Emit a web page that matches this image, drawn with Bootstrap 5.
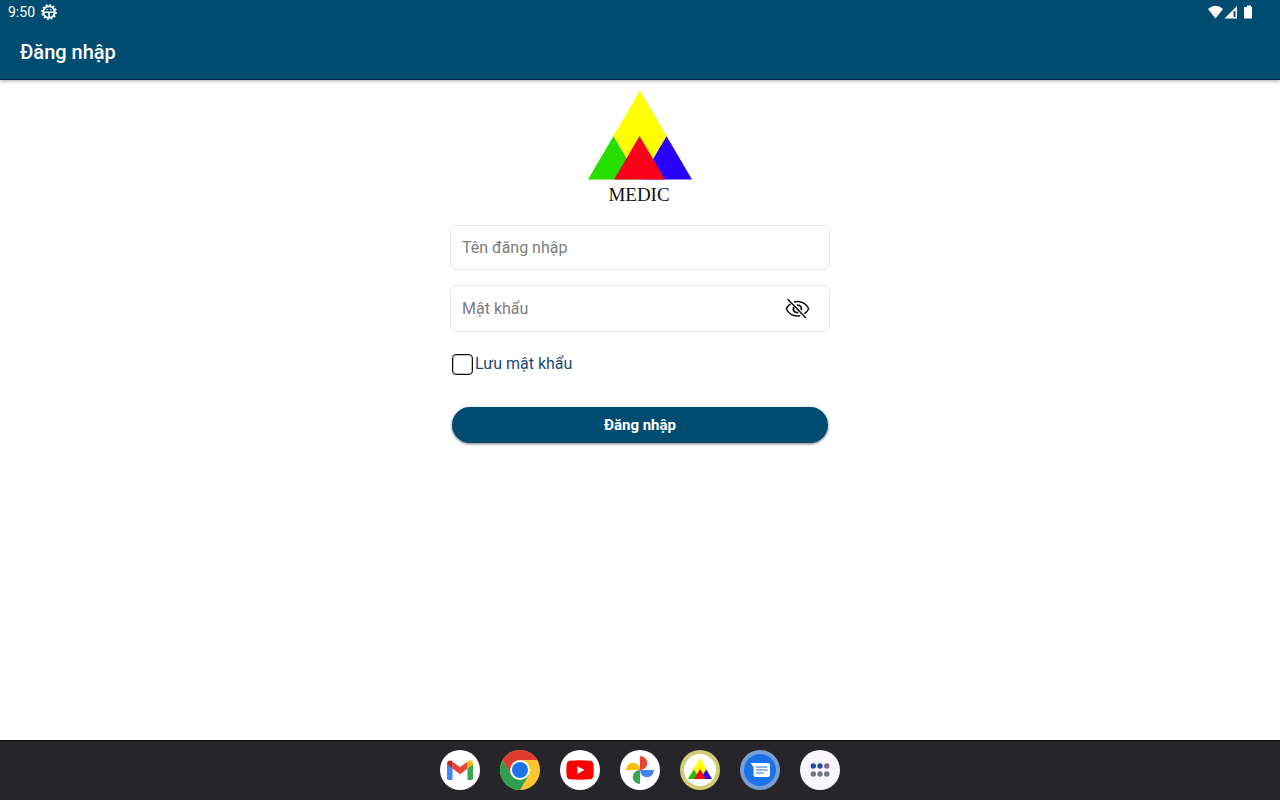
<!DOCTYPE html>
<html lang="vi">
<head>
<meta charset="utf-8">
<meta name="viewport" content="width=device-width, initial-scale=1">
<title>Đăng nhập</title>
<link rel="stylesheet" href="https://cdn.jsdelivr.net/npm/bootstrap@5.3.0/dist/css/bootstrap.min.css">
<style>
  :root { --brand: #004d71; }
  body { font-family: Roboto, "Noto Sans", sans-serif; font-size: 16px; line-height: 24px; background: #fff; }
  svg { display: block; }
  .app-header { background: var(--brand); border-bottom: 1px solid #00204a; box-shadow: 0 1px 4px rgba(0,0,0,.35); }
  .status-bar { height: 24px; font-size: 14px; padding: 0 27px 0 8px; }
  .status-left { gap: 6px; }
  .app-title { font-size: 20px; line-height: 24px; font-weight: 500; padding: 16px 20px 15px; }
  .login-form { width: 100%; max-width: 380px; padding-top: 12px; }
  .field { height: 45px; padding: 0 11px; border: 1px solid #e5e4ee; border-radius: 6px; font-size: 16px; color: #222; }
  .field::placeholder { color: #7c7c7c; opacity: 1; }
  .field-group { margin-top: 15px; border: 1px solid #e5e4ee; border-radius: 6px; }
  .field-group .field { border: 0; }
  .eye-btn { padding: 0 19px 0 8px; }
  .save-row { margin: 20px 0 31px; padding-left: 2px; gap: 2px; }
  .save-box { width: 21px; height: 21px; margin: 0; border: 1px solid #111; border-radius: 3px; box-shadow: inset 0 0 0 1px rgba(0,0,0,.25); }
  .form-check-input.save-box { margin: 0; }
  .save-label { color: #1b4a75; }
  .login-action { padding: 0 2px; }
  .login-btn { height: 36px; border-radius: 18px; background: var(--brand); font-size: 15px; line-height: 20px; font-weight: 700; box-shadow: 0 1px 3px rgba(0,0,0,.55); }
  .login-btn:hover { background: #00608c; }
  .dock { background: #26252a; box-shadow: inset 0 1px #08080a; height: 60px; gap: 20px; }
  .dock button { width: 40px; height: 40px; }
</style>
</head>
<body class="d-flex flex-column min-vh-100">
  <header class="app-header text-white">
    <div class="status-bar d-flex align-items-center justify-content-between">
      <div class="status-left d-flex align-items-center">
        <span>9:50</span>
        <svg width="16" height="16" viewBox="0 0 16 16" fill="none" stroke="#fff" aria-hidden="true">
          <circle cx="8" cy="8" r="7" stroke-width="1.6" stroke-dasharray="2 1.660"/>
          <circle cx="8" cy="8" r="5.700" stroke-width="1.800"/>
          <path d="M3 8.300h10M8 8v5" stroke-width="1.600"/>
          <path d="M5.500 5.600h1.300M9.200 5.600h1.300" stroke-width="1"/>
        </svg>
      </div>
      <div class="d-flex align-items-center">
        <svg width="46" height="16" viewBox="0 0 46 16" fill="#fff" aria-hidden="true">
          <path d="M1 5Q8.500-1.500 16 5L8.500 14.500Z"/>
          <path d="M30 2V14.500H17.500Z"/>
          <path d="M26.500 7h2v6h-2z" fill="#164b80"/>
          <path d="M38 3h2V1.500h4V3h1v11.500h-8V3z"/>
        </svg>
      </div>
    </div>
    <h1 class="app-title m-0">Đăng nhập</h1>
  </header>

  <main class="flex-grow-1 d-flex flex-column align-items-center pt-2">
    <svg width="106" height="125" viewBox="0 0 106 125" role="img" aria-label="MEDIC">
      <path d="M1 91.500 26.500 48 52 91.500Z" fill="#25df00"/>
      <path d="M54 91.500 79.500 48 105 91.500Z" fill="#2800ff"/>
      <path d="M53 2.500 79.500 48 53 91.500 26.500 48Z" fill="#ff0"/>
      <path d="M27 91.500 52.500 48 78 91.500Z" fill="#fb0019"/>
      <text x="52" y="113" text-anchor="middle" font-family="Liberation Serif, serif" font-size="19" fill="#111">MEDIC</text>
    </svg>
    <form class="login-form" onsubmit="return false">
      <input class="field form-control" id="user" type="text" placeholder="Tên đăng nhập" aria-label="Tên đăng nhập">
      <div class="field-group d-flex align-items-center">
        <input class="field form-control bg-transparent" id="pass" type="password" placeholder="Mật khẩu" aria-label="Mật khẩu">
        <button class="eye-btn btn border-0" type="button" aria-label="Hiện mật khẩu">
          <svg width="25" height="22" viewBox="0 0 25 22" fill="none" stroke="#111" stroke-width="1.500" stroke-linecap="round">
            <path d="M3 1.500 20.500 19.500"/>
            <path d="M5.200 6.200Q2.600 8.100 1.300 10.800C3.500 15.500 8 18 12.500 18Q13.600 18 14.600 17.800"/>
            <path d="M9.500 4Q11 3.600 12.500 3.600C17 3.600 21.500 6.200 23.700 10.800Q22.500 13.300 19.900 15.300"/>
            <path d="M8.600 9.600C7.600 12.300 9.700 14.800 12.500 14.600" stroke-width="1.800"/>
            <path d="M12.500 7.100C15 7 16.800 9 16.400 11.500" stroke-width="1.800"/>
          </svg>
        </button>
      </div>
      <div class="save-row d-flex align-items-center">
        <input class="save-box form-check-input flex-shrink-0" id="save" type="checkbox">
        <label class="save-label" for="save">Lưu mật khẩu</label>
      </div>
      <div class="login-action"><button class="login-btn btn text-white w-100 border-0 py-0" type="submit">Đăng nhập</button></div>
    </form>
  </main>

  <nav class="dock d-flex justify-content-center align-items-center" aria-label="Dock">
    <button class="btn p-0 border-0" type="button" aria-label="Gmail">
      <svg width="40" height="40" viewBox="0 0 40 40"><circle cx="20" cy="20" r="20" fill="#fff"/>
        <path d="M7 14 12.500 18V30H9Q7 30 7 28Z" fill="#4285f4"/><path d="M27.500 18 33 14V28Q33 30 31 30H27.500Z" fill="#34a853"/>
        <path d="M12.500 11.500 20 17.300 27.500 11.500V18.500L20 24.300 12.500 18.500Z" fill="#ea4335"/>
        <path d="M7 14C7 10.500 10 9.500 12.500 11.500V18.500L7 14.300Z" fill="#c5221f"/><path d="M33 14C33 10.500 30 9.500 27.500 11.500V18.500L33 14.300Z" fill="#fbbc04"/></svg>
    </button>
    <button class="btn p-0 border-0" type="button" aria-label="Chrome">
      <svg width="40" height="40" viewBox="0 0 40 40"><circle cx="20" cy="20" r="20" fill="#fbc62f"/>
        <path d="M2.700 10A20 20 0 0 1 37.300 10H20V20L11.300 25Z" fill="#dc3b2e"/>
        <path d="M2.700 10A20 20 0 0 0 20 40L28.700 25 20 20 11.300 25Z" fill="#2f9e4f"/>
        <circle cx="20" cy="20" r="10" fill="#fff"/><circle cx="20" cy="20" r="8" fill="#1a73e8"/></svg>
    </button>
    <button class="btn p-0 border-0" type="button" aria-label="YouTube">
      <svg width="40" height="40" viewBox="0 0 40 40"><circle cx="20" cy="20" r="20" fill="#fff"/>
        <path d="M10 10.800Q20 9.800 30 10.800 33 11.200 33.300 14 34 20 33.300 26 33 29 30 29.300 20 30.200 10 29.300 7 29 6.700 26 6 20 6.700 14 7 11.200 10 10.800Z" fill="#f00"/>
        <path d="M17.300 16 24.500 20 17.300 24Z" fill="#fff"/></svg>
    </button>
    <button class="btn p-0 border-0" type="button" aria-label="Photos">
      <svg width="40" height="40" viewBox="0 0 40 40"><circle cx="20" cy="20" r="20" fill="#fff"/>
        <path d="M20 6A7.300 7 0 0 1 20 20Z" fill="#ea4335"/><path d="M34 20A7 7.300 0 0 1 20 20Z" fill="#4285f4"/>
        <path d="M20 34A7.300 7 0 0 1 20 20Z" fill="#34a853"/><path d="M6 20A7 7.300 0 0 1 20 20Z" fill="#fbbc04"/></svg>
    </button>
    <button class="btn p-0 border-0" type="button" aria-label="Medic">
      <svg width="40" height="40" viewBox="0 0 40 40"><circle cx="20" cy="20" r="20" fill="#d0cc78"/><circle cx="20" cy="20" r="16" fill="#fff"/>
        <path d="M8 29 14 19 20 29Z" fill="#25c000"/><path d="M20 29 26 19 32 29Z" fill="#2800ff"/>
        <path d="M20 8 26.500 19 20 29 13.500 19Z" fill="#ff0"/><path d="M14 29 20 19 26 29Z" fill="#fb0019"/></svg>
    </button>
    <button class="btn p-0 border-0" type="button" aria-label="Messages">
      <svg width="40" height="40" viewBox="0 0 40 40"><circle cx="20" cy="20" r="20" fill="#7b9fd3"/><circle cx="20" cy="20" r="16" fill="#1a73e8"/>
        <path d="M10.500 13H28Q30 13 30 15V25Q30 27 28 27H15.500Q13.500 27 13.500 25V17Z" fill="#fff"/>
        <path d="M16 17H27.500M16 20H27.500M16 23H24" stroke="#6c9fe6" stroke-width="1.600"/></svg>
    </button>
    <button class="btn p-0 border-0" type="button" aria-label="Apps">
      <svg width="40" height="40" viewBox="0 0 40 40"><circle cx="20" cy="20" r="20" fill="#f8f5fe"/>
        <g fill="#6e7389"><circle cx="13.300" cy="24" r="2.700"/><circle cx="20" cy="24" r="2.700"/><circle cx="26.700" cy="24" r="2.700"/></g>
        <g fill="#1f519e"><circle cx="13.300" cy="16" r="2.700"/><circle cx="20" cy="16" r="2.700"/></g><circle cx="26.700" cy="16" r="2.700" fill="#8b6491"/></svg>
    </button>
  </nav>
<script src="https://cdn.jsdelivr.net/npm/bootstrap@5.3.0/dist/js/bootstrap.bundle.min.js"></script>
</body>
</html>
